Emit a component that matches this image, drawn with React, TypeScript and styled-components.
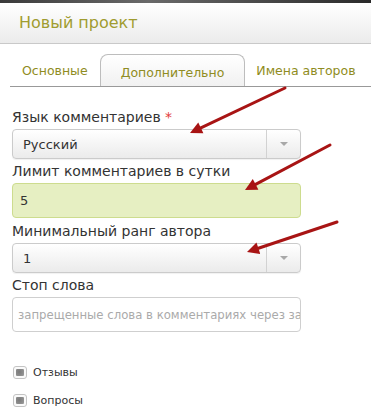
import styled, { createGlobalStyle } from "styled-components";

const GlobalStyle = createGlobalStyle`
  html, body {
    margin: 0;
    padding: 0;
    background: #fff;
  }
  body {
    font-family: "DejaVu Sans", Verdana, sans-serif;
    color: #333;
  }
`;

const Page = styled.div`
  position: relative;
  width: 371px;
  height: 420px;
  overflow: hidden;
`;

const TopStrip = styled.div`
  height: 3px;
  background: linear-gradient(to right, #3a3a3a, #6a6a6a 40%, #2a2a2a);
`;

const Header = styled.div`
  height: 40px;
  display: flex;
  align-items: center;
  padding-left: 19px;
  background: linear-gradient(to bottom, #ffffff, #ebebeb);
  border-bottom: 1px solid #c9c9c9;
`;

const Title = styled.div`
  font-size: 16px;
  color: #a09c30;
  margin-top: -2px;
`;

const TabBar = styled.div`
  display: flex;
  align-items: flex-end;
  margin: 10px 0 0 10px;
  border-bottom: 1px solid #999;
  height: 32px;
`;

const Tab = styled.div<{ $active?: boolean; $pad: string }>`
  height: 31px;
  box-sizing: border-box;
  display: flex;
  align-items: center;
  padding: ${(p) => p.$pad};
  font-size: 12.5px;
  color: #8f8c22;
  white-space: nowrap;
  ${(p) =>
    p.$active &&
    `
    border: 1px solid #bdbdbd;
    border-bottom: none;
    border-radius: 8px 8px 0 0;
    background: linear-gradient(to bottom, #ffffff, #f1f1f1);
    height: 32px;
    padding-top: 4px;
  `}
`;

const Form = styled.div`
  display: flex;
  flex-direction: column;
  padding: 20px 0 0 12px;
  width: 289px;
`;

const Label = styled.div`
  font-size: 14px;
  line-height: 20px;
  margin-bottom: 2px;
  color: #333;
`;

const Required = styled.span`
  color: #e23a3a;
`;

const SelectBox = styled.div`
  height: 30px;
  box-sizing: border-box;
  display: flex;
  border: 1px solid #cbcbcb;
  border-radius: 4px;
  background: linear-gradient(to bottom, #ffffff, #ebebeb);
  box-shadow: 0 1px 1px rgba(0, 0, 0, 0.06);
  margin-bottom: 2px;
`;

const SelectValue = styled.div`
  flex: 1;
  display: flex;
  align-items: center;
  padding-left: 10px;
  font-size: 13px;
  color: #333;
`;

const SelectArrow = styled.div`
  width: 33px;
  border-left: 1px solid #d2d2d2;
  display: flex;
  align-items: center;
  justify-content: center;

  &::after {
    content: "";
    border-left: 4px solid transparent;
    border-right: 4px solid transparent;
    border-top: 4px solid #a8a8a8;
  }
`;

const TextField = styled.div<{ $filled?: boolean }>`
  height: 35px;
  box-sizing: border-box;
  display: flex;
  align-items: center;
  padding-left: ${(p) => (p.$filled ? "7px" : "5px")};
  border: 1px solid ${(p) => (p.$filled ? "#cddc8e" : "#cfcfcf")};
  border-radius: 4px;
  background: ${(p) => (p.$filled ? "#e6efc2" : "#fff")};
  font-size: ${(p) => (p.$filled ? "13px" : "11.7px")};
  color: ${(p) => (p.$filled ? "#333" : "#aaa")};
  white-space: nowrap;
  overflow: hidden;
  margin-bottom: 3px;
`;

const Checks = styled.div`
  display: flex;
  flex-direction: column;
  gap: 15px;
  padding: 31px 0 0 13px;
`;

const CheckRow = styled.label`
  display: flex;
  align-items: center;
  gap: 6px;
  font-size: 11px;
  color: #333;
  height: 13px;
`;

const CheckBox = styled.span`
  width: 14px;
  height: 13px;
  box-sizing: border-box;
  border: 1px solid #c4c4c4;
  border-radius: 3px;
  background: #fafafa;
  display: flex;
  align-items: center;
  justify-content: center;

  &::after {
    content: "";
    width: 8px;
    height: 7px;
    border-radius: 1px;
    background: radial-gradient(circle at 40% 40%, #7a7a7a, #8c8c8c 60%, #a0a0a0);
  }
`;

const Overlay = styled.svg`
  position: absolute;
  left: 0;
  top: 0;
  pointer-events: none;
`;

const arrows = [
  { x1: 285, y1: 88, x2: 190, y2: 133 },
  { x1: 330, y1: 145, x2: 245, y2: 190 },
  { x1: 337, y1: 222, x2: 247, y2: 252 },
];

function Arrow({ x1, y1, x2, y2 }: { x1: number; y1: number; x2: number; y2: number }) {
  const a = Math.atan2(y2 - y1, x2 - x1);
  const len = 12;
  const w = 6;
  const bx = x2 - Math.cos(a) * len;
  const by = y2 - Math.sin(a) * len;
  const px = -Math.sin(a) * w;
  const py = Math.cos(a) * w;
  return (
    <g>
      <line x1={x1} y1={y1} x2={bx} y2={by} stroke="#a81414" strokeWidth={3} strokeLinecap="round" />
      <polygon points={`${x2},${y2} ${bx + px},${by + py} ${bx - px},${by - py}`} fill="#a81414" />
    </g>
  );
}

export default function App() {
  return (
    <Page>
      <GlobalStyle />
      <TopStrip />
      <Header>
        <Title>Новый проект</Title>
      </Header>
      <TabBar>
        <Tab $pad="0 12px">Основные</Tab>
        <Tab $active $pad="0 20px">Дополнительно</Tab>
        <Tab $pad="0 11px">Имена авторов</Tab>
      </TabBar>
      <Form>
        <Label>
          Язык комментариев <Required>*</Required>
        </Label>
        <SelectBox>
          <SelectValue>Русский</SelectValue>
          <SelectArrow />
        </SelectBox>
        <Label>Лимит комментариев в сутки</Label>
        <TextField $filled>5</TextField>
        <Label>Минимальный ранг автора</Label>
        <SelectBox>
          <SelectValue>1</SelectValue>
          <SelectArrow />
        </SelectBox>
        <Label>Стоп слова</Label>
        <TextField>запрещенные слова в комментариях через запятую</TextField>
      </Form>
      <Checks>
        <CheckRow>
          <CheckBox />
          Отзывы
        </CheckRow>
        <CheckRow>
          <CheckBox />
          Вопросы
        </CheckRow>
      </Checks>
      <Overlay width={371} height={420}>
        {arrows.map((a, i) => (
          <Arrow key={i} {...a} />
        ))}
      </Overlay>
    </Page>
  );
}
